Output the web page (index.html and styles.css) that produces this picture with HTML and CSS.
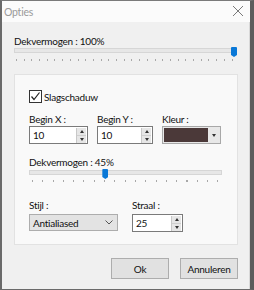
FILE: index.html
```html
<!DOCTYPE html>
<html>
<head>
<meta charset="utf-8">
<title>Opties</title>
<link rel="stylesheet" href="styles.css">
</head>
<body>
<div class="window">
  <div class="titlebar">
    <span class="title">Opties</span>
    <svg class="close" width="12" height="12" viewBox="0 0 12 12"><path d="M1 1L11 11M11 1L1 11" stroke="#7a7a7a" stroke-width="1" fill="none"/></svg>
  </div>
  <div class="content">
    <div class="label">Dekvermogen : 100%</div>
    <div class="slider slider-main">
      <div class="track"></div>
      <div class="thumb" style="left:calc(100% - 5px)"></div>
      <div class="ticks"></div>
    </div>

    <div class="group">
      <div class="check">
        <span class="box"><svg width="11" height="11" viewBox="0 0 11 11"><path d="M1.5 5.5L4 8.5L9.5 1.5" stroke="#222" stroke-width="1.2" fill="none"/></svg></span>
        <span>Slagschaduw</span>
      </div>

      <div class="row3">
        <div class="field">
          <div class="flabel">Begin X :</div>
          <div class="spin w59">
            <span class="val">10</span>
            <span class="arrows"><span class="up"></span><span class="down"></span></span>
          </div>
        </div>
        <div class="field">
          <div class="flabel">Begin Y :</div>
          <div class="spin w56">
            <span class="val">10</span>
            <span class="arrows"><span class="up"></span><span class="down"></span></span>
          </div>
        </div>
        <div class="field">
          <div class="flabel">Kleur :</div>
          <div class="colorbox">
            <span class="swatch"></span>
            <span class="drop"><span class="tri"></span></span>
          </div>
        </div>
      </div>

      <div class="flabel op2">Dekvermogen : 45%</div>
      <div class="slider slider-sub">
        <div class="track"></div>
        <div class="thumb" style="left:38%"></div>
        <div class="ticks"></div>
      </div>

      <div class="row2">
        <div class="field">
          <div class="flabel">Stijl :</div>
          <div class="select">
            <span>Antialiased</span>
            <svg width="8" height="5" viewBox="0 0 8 5"><path d="M0.5 0.5L4 4L7.5 0.5" stroke="#555" stroke-width="1" fill="none"/></svg>
          </div>
        </div>
        <div class="field">
          <div class="flabel">Straal :</div>
          <div class="spin w51">
            <span class="val">25</span>
            <span class="arrows"><span class="up"></span><span class="down"></span></span>
          </div>
        </div>
      </div>
    </div>

    <div class="buttons">
      <div class="btn">Ok</div>
      <div class="btn">Annuleren</div>
    </div>
  </div>
</div>
</body>
</html>
```

FILE: styles.css
```css
html, body {
  margin: 0;
  padding: 0;
  background: #5f5f5f;
}
body {
  font-family: "Lato", "Open Sans", sans-serif;
  font-size: 10px;
  letter-spacing: -0.25px;
  color: #111;
}
.window {
  width: 254px;
  height: 290px;
  box-sizing: border-box;
  border-left: 2px solid #6a6a6a;
  border-right: 4px solid #5c5c5c;
  border-top: 1px solid #7a7a7a;
  border-bottom: 1px solid #6a6a6a;
  display: flex;
  flex-direction: column;
  background: #f0f0f0;
}
.titlebar {
  height: 21px;
  flex: none;
  background: #fbfbfb;
  display: flex;
  align-items: center;
  justify-content: space-between;
  padding: 0 6px 0 2px;
}
.title {
  color: #9a9a9a;
  font-size: 10.5px;
}
.close {
  display: block;
  margin-top: -1px;
}
.content {
  flex: 1;
  background: #f0f0f0;
  padding: 12px 12px 0 12px;
  display: flex;
  flex-direction: column;
  border-right: 1px solid #d8d8d8;
}
.label {
  line-height: 15px;
  height: 15px;
}
.slider {
  position: relative;
  display: flex;
  flex-direction: column;
}
.slider .track {
  height: 3px;
  background: #e7e7e7;
  border: 1px solid #d6d6d6;
}
.slider .thumb {
  position: absolute;
  top: -1px;
  width: 6px;
  height: 10px;
  background: #0a78d7;
  border-radius: 1px;
  clip-path: polygon(0 0, 100% 0, 100% 80%, 50% 100%, 0 80%);
}
.slider .ticks {
  height: 2px;
  margin-top: 6px;
  background: repeating-linear-gradient(90deg, #a8a8a8 0 1px, transparent 1px 7.7px);
}
.slider-main {
  width: 222px;
  margin-top: -1px;
}
.slider-main .ticks {
  margin-left: 2px;
  margin-right: 1px;
}
.group {
  width: 208px;
  height: 154px;
  margin-top: 13px;
  background: #f9f9f9;
  border: 1px solid #e2e2e2;
  padding: 15px 0 0 14px;
  display: flex;
  flex-direction: column;
}
.check {
  display: flex;
  align-items: center;
  gap: 2px;
  height: 13px;
}
.box {
  width: 11px;
  height: 11px;
  border: 1px solid #333;
  background: #fff;
  display: flex;
}
.row3, .row2 {
  display: flex;
  gap: 9px;
}
.row3 {
  margin-top: 9px;
}
.row2 {
  margin-top: 16px;
  gap: 14px;
}
.field {
  display: flex;
  flex-direction: column;
}
.flabel {
  line-height: 14px;
  height: 14px;
}
.spin {
  height: 18px;
  box-sizing: border-box;
  border: 1px solid #7a7a7a;
  background: #fff;
  display: flex;
  justify-content: space-between;
  align-items: center;
  padding-left: 3px;
}
.w59 { width: 59px; }
.w56 { width: 56px; }
.w51 { width: 51px; }
.arrows {
  width: 9px;
  height: 15px;
  margin-right: 1px;
  display: flex;
  flex-direction: column;
  background: #e6e6e6;
  border: 0 solid #c8c8c8;
  border-left-width: 1px;
}
.arrows span {
  flex: 1;
  display: flex;
  align-items: center;
  justify-content: center;
}
.arrows .up {
  border-bottom: 1px solid #cfcfcf;
}
.arrows .up::before {
  content: "";
  border-left: 2px solid transparent;
  border-right: 2px solid transparent;
  border-bottom: 3px solid #333;
}
.arrows .down::before {
  content: "";
  border-left: 2px solid transparent;
  border-right: 2px solid transparent;
  border-top: 3px solid #333;
}
.colorbox {
  width: 59px;
  height: 18px;
  box-sizing: border-box;
  border: 1px solid #a8a8a8;
  background: #e8e8e8;
  display: flex;
  padding: 1px;
}
.swatch {
  width: 44px;
  background: #4b3939;
}
.drop {
  flex: 1;
  display: flex;
  align-items: center;
  justify-content: center;
}
.tri {
  border-left: 2px solid transparent;
  border-right: 2px solid transparent;
  border-top: 3px solid #333;
}
.op2 {
  margin-top: 11px;
}
.slider-sub {
  width: 193px;
  margin-top: 1px;
}
.slider-sub .ticks {
  margin-left: 3px;
  margin-right: 4px;
  margin-top: 5px;
  background: repeating-linear-gradient(90deg, #a8a8a8 0 1px, transparent 1px 10.3px);
}
.select {
  width: 89px;
  height: 17px;
  box-sizing: border-box;
  border: 1px solid #adadad;
  background: #e3e3e3;
  display: flex;
  align-items: center;
  justify-content: space-between;
  padding: 0 4px 0 3px;
  margin-top: 2px;
}
.row2 .spin {
  margin-top: 2px;
}
.buttons {
  display: flex;
  justify-content: flex-end;
  gap: 11px;
  margin-top: 13px;
  margin-right: -1px;
}
.btn {
  width: 58px;
  height: 21px;
  box-sizing: border-box;
  border: 1px solid #adadad;
  background: #e1e1e1;
  display: flex;
  align-items: center;
  justify-content: center;
}
```
